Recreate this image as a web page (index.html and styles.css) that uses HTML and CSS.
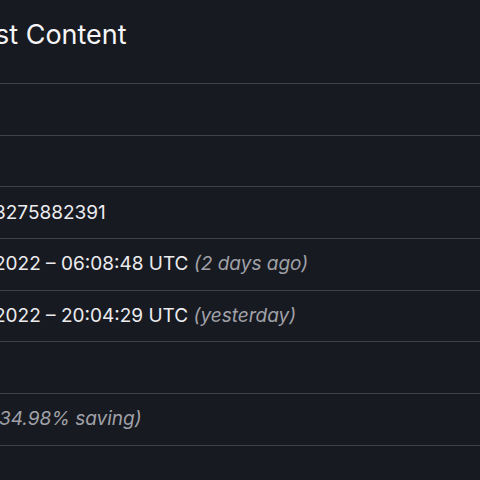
FILE: index.html
```html
<!DOCTYPE html>
<html lang="en">
<head>
<meta charset="utf-8">
<title>Content</title>
<link rel="stylesheet" href="styles.css">
</head>
<body>
<main class="page">
  <h1 class="title">st Content</h1>
  <div class="table">
    <div class="row"><span class="value"></span></div>
    <div class="row"><span class="value"></span></div>
    <div class="row"><span class="value">3275882391</span></div>
    <div class="row"><span class="value">2022 – 06:08:48 UTC <em class="muted">(2 days ago)</em></span></div>
    <div class="row"><span class="value">2022 – 20:04:29 UTC <em class="muted">(yesterday)</em></span></div>
    <div class="row"><span class="value"></span></div>
    <div class="row"><span class="value shift"><em class="muted">(34.98% saving)</em></span></div>
    <div class="row"><span class="value"></span></div>
  </div>
</main>
</body>
</html>
```
FILE: styles.css
```css
html, body {
  margin: 0;
  padding: 0;
  background: #181a21;
  overflow: hidden;
}
body {
  width: 480px;
  height: 480px;
  font-family: Inter, "Noto Sans", sans-serif;
  color: #ececef;
}
.page {
  display: flex;
  flex-direction: column;
}
.title {
  margin: 0 0 0 -5px;
  padding-top: 18px;
  height: 82px;
  box-sizing: border-box;
  font-size: 27px;
  font-weight: 400;
  line-height: 34px;
  color: #f6f6f8;
}
.table {
  display: flex;
  flex-direction: column;
  margin-top: 1px;
}
.row {
  height: 51.67px;
  box-sizing: border-box;
  border-top: 1.5px solid #3f424d;
  display: flex;
  align-items: center;
}
.value {
  margin-left: -6px;
  font-size: 19px;
  line-height: 24px;
  white-space: nowrap;
}
.value.shift {
  margin-left: -8px;
}
.muted {
  font-style: italic;
  color: #a0a1a8;
}
```
